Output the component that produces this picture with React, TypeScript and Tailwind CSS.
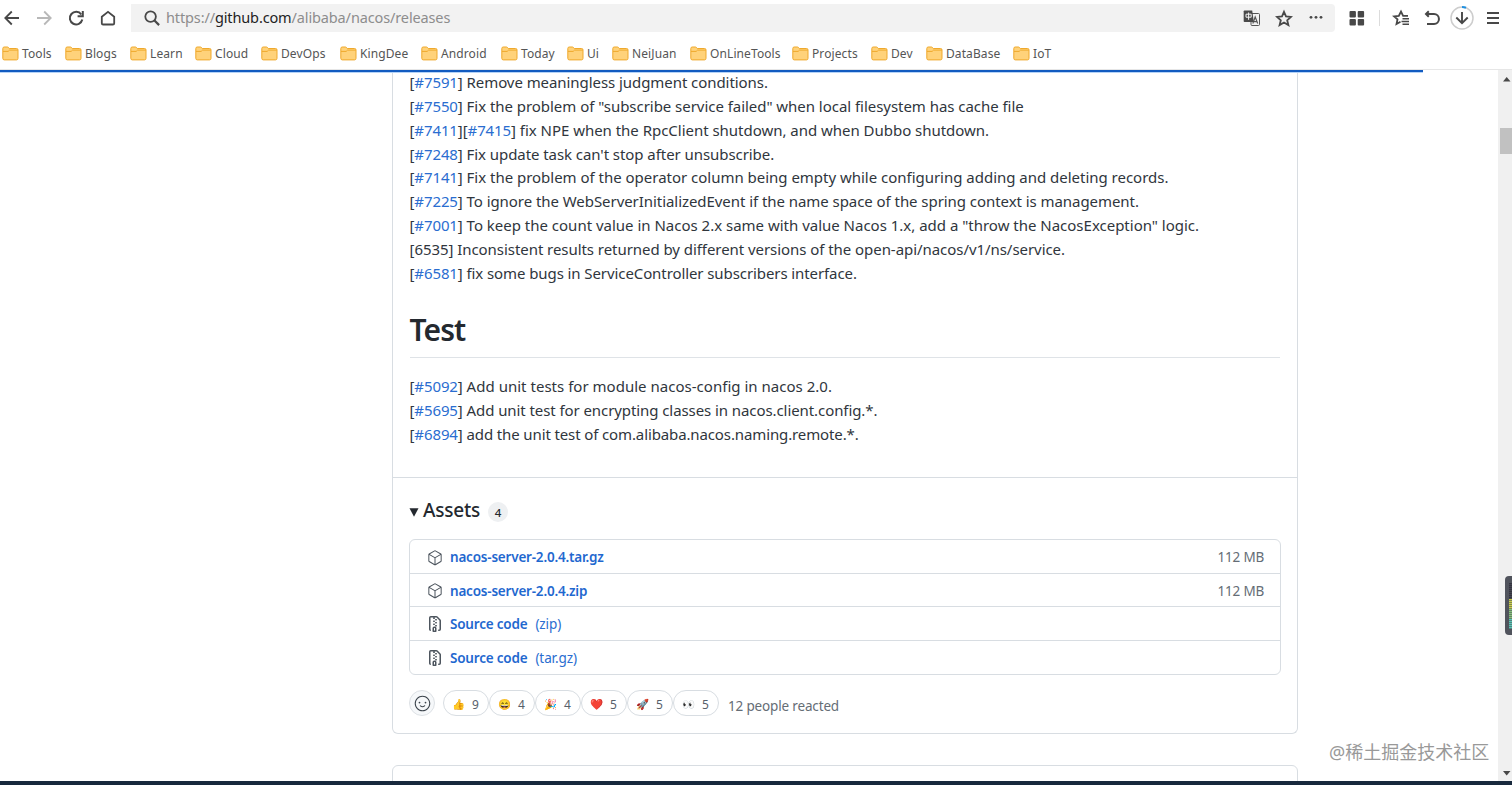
import type { ReactNode } from "react";
import { GoPackage, GoSmiley } from "react-icons/go";

const bookmarks = [
  { name: "Tools", width: "w-[63px]" },
  { name: "Blogs", width: "w-[65px]" },
  { name: "Learn", width: "w-[65px]" },
  { name: "Cloud", width: "w-[66px]" },
  { name: "DevOps", width: "w-[79px]" },
  { name: "KingDee", width: "w-[81px]" },
  { name: "Android", width: "w-[80px]" },
  { name: "Today", width: "w-[66px]" },
  { name: "Ui", width: "w-[45px]" },
  { name: "NeiJuan", width: "w-[78px]" },
  { name: "OnLineTools", width: "w-[102px]" },
  { name: "Projects", width: "w-[79px]" },
  { name: "Dev", width: "w-[55px]" },
  { name: "DataBase", width: "w-[87px]" },
  { name: "IoT", width: "w-[60px]" },
];

const fixes = [
  { ids: ["#7591"], text: " Remove meaningless judgment conditions.", tracking: "tracking-[-0.065px]" },
  { ids: ["#7550"], text: ' Fix the problem of "subscribe service failed" when local filesystem has cache file', tracking: "tracking-[-0.04px]" },
  { ids: ["#7411", "#7415"], text: " fix NPE when the RpcClient shutdown, and when Dubbo shutdown.", tracking: "tracking-[-0.025px]" },
  { ids: ["#7248"], text: " Fix update task can't stop after unsubscribe.", tracking: "tracking-[-0.065px]" },
  { ids: ["#7141"], text: " Fix the problem of the operator column being empty while configuring adding and deleting records.", tracking: "tracking-[-0.018px]" },
  { ids: ["#7225"], text: " To ignore the WebServerInitializedEvent if the name space of the spring context is management.", tracking: "tracking-[-0.057px]" },
  { ids: ["#7001"], text: ' To keep the count value in Nacos 2.x same with value Nacos 1.x, add a "throw the NacosException" logic.', tracking: "tracking-[-0.008px]" },
  { ids: [], text: "[6535] Inconsistent results returned by different versions of the open-api/nacos/v1/ns/service.", tracking: "tracking-[-0.055px]" },
  { ids: ["#6581"], text: " fix some bugs in ServiceController subscribers interface.", tracking: "tracking-[-0.09px]" },
];

const tests = [
  { ids: ["#5092"], text: " Add unit tests for module nacos-config in nacos 2.0.", tracking: "tracking-[0.02px]" },
  { ids: ["#5695"], text: " Add unit test for encrypting classes in nacos.client.config.*.", tracking: "tracking-[-0.08px]" },
  { ids: ["#6894"], text: " add the unit test of com.alibaba.nacos.naming.remote.*.", tracking: "tracking-[-0.12px]" },
];

const assets = [
  { name: "nacos-server-2.0.4.tar.gz", size: "112 MB" },
  { name: "nacos-server-2.0.4.zip", size: "112 MB" },
  { name: "Source code", format: "(zip)" },
  { name: "Source code", format: "(tar.gz)" },
];

const reactions = [
  { emoji: "👍", count: 9 },
  { emoji: "😄", count: 4 },
  { emoji: "🎉", count: 4 },
  { emoji: "❤️", count: 5 },
  { emoji: "🚀", count: 5 },
  { emoji: "👀", count: 5 },
];

type Entry = { ids: string[]; text: string; tracking: string };

function Icon({ children, className = "" }: { children: ReactNode; className?: string }) {
  return (
    <svg
      width="18"
      height="18"
      viewBox="0 0 18 18"
      fill="none"
      stroke="currentColor"
      strokeWidth="1.8"
      className={`shrink-0 ${className}`}
    >
      {children}
    </svg>
  );
}

function FolderIcon() {
  return (
    <svg width="17" height="15" viewBox="0 0 17 15" className="shrink-0">
      <path
        d="M.8 2.6Q.8 1 2.2 1h3.2q.7 0 1.1.5l.8 1h7.2q1.5 0 1.5 1.4v8.4q0 1.6-1.5 1.6H2.3Q.8 13.9.8 12.3z"
        fill="#ffd27a"
        stroke="#efa92c"
      />
      <path d="M1 5.4h5.2l1.3-1.3h8.3" fill="none" stroke="#efa92c" />
    </svg>
  );
}

function FileZipIcon() {
  return (
    <svg width="16" height="16" viewBox="0 0 16 16" fill="currentColor">
      <path
        fillRule="evenodd"
        d="M3.5 1.75a.25.25 0 01.25-.25h3a.75.75 0 000 1.5h.5a.75.75 0 000-1.5h2.086a.25.25 0 01.177.073l2.914 2.914a.25.25 0 01.073.177v8.586a.25.25 0 01-.25.25h-.5a.75.75 0 000 1.5h.5A1.75 1.75 0 0014 13.25V4.664c0-.464-.184-.909-.513-1.237L10.573.513A1.75 1.75 0 009.336 0H3.75A1.75 1.75 0 002 1.75v11.5c0 .649.353 1.214.874 1.515a.75.75 0 10.752-1.298.25.25 0 01-.126-.217V1.75zM8.75 3a.75.75 0 000 1.5h.5a.75.75 0 000-1.5h-.5zM6 5.25a.75.75 0 01.75-.75h.5a.75.75 0 010 1.5h-.5A.75.75 0 016 5.25zm2 1.5A.75.75 0 018.75 6h.5a.75.75 0 010 1.5h-.5A.75.75 0 018 6.75zm-1.25.75a.75.75 0 000 1.5h.5a.75.75 0 000-1.5h-.5zM8 9.75A.75.75 0 018.75 9h.5a.75.75 0 010 1.5h-.5A.75.75 0 018 9.75zm-.75.75a1.75 1.75 0 00-1.75 1.75v3c0 .414.336.75.75.75h2.5a.75.75 0 00.75-.75v-3a1.75 1.75 0 00-1.75-1.75h-.5zM7 12.25a.25.25 0 01.25-.25h.5a.25.25 0 01.25.25v2.25H7v-2.25z"
      />
    </svg>
  );
}

function Toolbar() {
  return (
    <div className="flex h-9 items-center text-[#484848]">
      <div className="-ml-1 flex">
        <button className="flex w-8 justify-center">
          <Icon><path d="M16 9H2.5M8.8 2.5 2.3 9l6.5 6.5" /></Icon>
        </button>
        <button className="flex w-8 justify-center text-[#b8b8b8]">
          <Icon><path d="M2 9h13.5M9.2 2.5 15.7 9l-6.5 6.5" /></Icon>
        </button>
        <button className="flex w-8 justify-center">
          <Icon>
            <path d="M14.3 5.5A6.3 6.3 0 1 0 15.3 10.5" strokeWidth="2" />
            <path d="M15.8 2v5.2h-5.2" strokeWidth="2" />
          </Icon>
        </button>
        <button className="flex w-[31px] justify-center">
          <Icon><path d="M2.8 7.8 9 2.8l6.2 5v6.4q0 1.3-1.3 1.3H4.1q-1.3 0-1.3-1.3z" /></Icon>
        </button>
      </div>

      {/* address bar */}
      <div className="ml-[7.5px] flex h-7 w-[1204px] items-center rounded-r bg-[#f2f2f2]">
        <Icon className="ml-3">
          <circle cx="7.6" cy="7.6" r="5.3" />
          <path d="m11.5 11.5 4.6 4.6" strokeWidth="2.2" />
        </Icon>
        <span className="mt-[-1px] ml-[5.5px] text-[14.5px] tracking-[-0.13px] text-[#8d8d8d]">
          https://<span className="text-[#222]">github.com</span>/alibaba/nacos/releases
        </span>
        <div className="ml-auto flex items-center">
          <button className="flex w-8 justify-center">
            <svg width="18" height="18" viewBox="0 0 18 18" fill="none">
              <rect x="8" y="4.5" width="8.5" height="12" rx="1" fill="#f2f2f2" stroke="#555" />
              <path d="M9.8 14.5 12.2 8l2.5 6.5M10.6 12.6h3.3" stroke="#555" strokeWidth="1.2" />
              <path d="M1.5 1.5h7.7l1.6 11.5H1.5q-.8 0-.8-.8V2.3q0-.8.8-.8z" fill="#4a4a4a" />
              <path d="M3 5.2h5.2v3H3zM5.6 3.5v7.3" stroke="#f2f2f2" />
            </svg>
          </button>
          <button className="flex w-8 justify-center">
            <Icon><path d="m9 2.8 2 4.6 5 .5-3.8 3.3 1.2 4.9L9 13.5l-4.400 2.600 1.200-4.900L2 7.900l5-.5z" /></Icon>
          </button>
          <button className="mr-[3px] flex w-8 justify-center">
            <svg width="18" height="18" viewBox="0 0 18 18" fill="currentColor">
              <circle cx="4" cy="8.3" r="1.4" />
              <circle cx="9" cy="8.3" r="1.4" />
              <circle cx="14" cy="8.3" r="1.4" />
            </svg>
          </button>
        </div>
      </div>

      <button className="flex w-11 justify-center">
        <svg width="18" height="18" viewBox="0 0 18 18" fill="currentColor">
          <rect x="1.5" y="2" width="6.4" height="6.4" rx="1" />
          <rect x="9.7" y="2" width="6.4" height="6.4" rx="1" />
          <rect x="1.5" y="10" width="6.4" height="6.4" rx="1" />
          <rect x="9.7" y="10" width="6.4" height="6.4" rx="1" />
        </svg>
      </button>
      <span className="h-4 w-px bg-[#dcdcdc]" />
      <button className="flex w-[43px] justify-center">
        <Icon>
          <path d="M8.5 12.8 4.5 15l1-4.6L2 7.4l4.800-.5L9 2.5l2.100 4.400h4.900" strokeWidth="1.8" />
          <path d="M10.5 9.8h6.5M9.5 12.5h7.5M10.5 15.2h6.5" strokeWidth="1.6" />
        </Icon>
      </button>
      <button className="flex w-[19px] justify-center">
        <Icon><path d="M5.8 2.2 3 5l2.8 2.8M3 5h8a4.9 4.9 0 0 1 0 9.9H4" strokeWidth="2" /></Icon>
      </button>
      <button className="flex w-10 justify-center">
        <svg width="24" height="24" viewBox="0 0 24 24" fill="none">
          <circle cx="12" cy="12" r="11" stroke="#cdcdcd" strokeWidth="1.5" />
          <path d="M12 1a11 11 0 0 1 4 .8" stroke="#1e90e0" strokeWidth="2" />
          <path d="M12 6v11M6.3 11.5 12 17.2l5.7-5.7" stroke="currentColor" strokeWidth="1.9" />
        </svg>
      </button>
      <button className="flex w-[23px] justify-center">
        <Icon><path d="M3 4h12M3 9h12M3 14h12" /></Icon>
      </button>
    </div>
  );
}

function Bookmarks() {
  return (
    <div className="flex h-[33px] items-center pt-px pl-[2px]">
      {bookmarks.map((b) => (
        <div key={b.name} className={`flex shrink-0 items-center gap-[3px] ${b.width}`}>
          <FolderIcon />
          <span className="pt-px text-[12px] leading-4 tracking-[0.1px] text-[#555]">{b.name}</span>
        </div>
      ))}
    </div>
  );
}

function EntryLine({ entry }: { entry: Entry }) {
  return (
    <p className={`h-[23.84px] whitespace-nowrap text-[15px] leading-[23.84px] text-[#30363d] ${entry.tracking}`}>
      {entry.ids.map((id) => (
        <span key={id} className="tracking-[-0.1px]">
          [<a href="#" className="text-[#2a6dd0]">{id}</a>]
        </span>
      ))}
      {entry.text}
    </p>
  );
}

function Assets() {
  return (
    <div className="px-4">
      <div className="flex h-[61.4px] items-center pt-[3px]">
        <svg width="10" height="9" viewBox="0 0 10 9" className="mt-1 shrink-0">
          <path d="M.5.3h9L5 8.7z" fill="#24292f" />
        </svg>
        <h3 className="ml-[4px] text-[19px] font-medium tracking-[-0.2px]">Assets</h3>
        <span className="mt-[4px] ml-2 flex size-5 items-center justify-center rounded-full bg-[#eef0f2] text-[11.5px] font-medium">
          4
        </span>
      </div>

      <ul className="rounded-md border border-[#d8dde2]">
        {assets.map((a, i) => (
          <li
            key={i}
            className="flex h-[33.4px] items-center border-b border-[#d8dde2] px-4 pt-[2px] text-[13.5px] tracking-[-0.2px] text-[#656d76] last:border-b-0"
          >
            <span className="ml-[0.5px] w-[23.5px] text-[#4d555e]">
              {a.size ? <GoPackage size={16} /> : <FileZipIcon />}
            </span>
            <a href="#" className="font-semibold text-[#1f68cf]">{a.name}</a>
            {a.format && <a href="#" className="ml-[8px] tracking-[-0.1px] text-[#2a6dd0]">{a.format}</a>}
            {a.size && <span className="ml-auto">{a.size}</span>}
          </li>
        ))}
      </ul>

      <div className="mt-[15.5px] flex h-[26px] items-center">
        <button className="mr-2 flex size-[26px] items-center justify-center rounded-full border border-[#dde1e5] bg-[#f6f8fa] text-[#3c444c]">
          <GoSmiley size={17} className="shrink-0" />
        </button>
        {reactions.map((r) => (
          <button
            key={r.emoji}
            className="flex h-[26px] w-[46px] items-center rounded-full border border-[#d8dde2] pt-[2px] pl-[7px] text-[12px] text-[#57606a]"
          >
            <span className="w-[15px] text-center font-['Noto_Color_Emoji'] text-[10.5px]">{r.emoji}</span>
            <span className="ml-[6px] pt-px">{r.count}</span>
          </button>
        ))}
        <span className="mt-[5px] ml-[9px] text-[13.5px] tracking-[-0.16px] text-[#656d76]">12 people reacted</span>
      </div>
    </div>
  );
}

function Scrollbar() {
  return (
    <div className="flex w-[14px] flex-col items-end bg-[#f0f0f0]">
      <svg width="12" height="58" viewBox="0 0 12 58">
        <path d="M3 11.5h7.5L6.7 7z" fill="#484848" />
      </svg>
      <div className="h-[26px] w-3 bg-[#c1c1c1]" />
      <svg width="12" height="12" viewBox="0 0 12 12" className="mt-auto">
        <path d="M3 2h7.5L6.7 6.5z" fill="#484848" />
      </svg>
    </div>
  );
}

// level meter docked to the right edge of the screen
function LevelMeter() {
  return (
    <div className="absolute top-[576px] right-0 h-[59px] w-[7px] rounded-l bg-[#50535c] pt-[7px] pl-1">
      <svg width="3" height="46" viewBox="0 0 3 46">
        {Array.from({ length: 23 }, (_, i) => (
          <rect
            key={i}
            y={i * 2}
            width="3"
            height="1.4"
            fill={i < 8 ? "#34343f" : i < 13 ? "#c9cf4a" : i < 18 ? "#86c27a" : "#58c5b4"}
          />
        ))}
      </svg>
    </div>
  );
}

export default function App() {
  return (
    <div className="relative flex h-[785px] w-[1512px] flex-col overflow-hidden bg-white font-['Noto_Sans','Noto_Sans_CJK_SC',sans-serif] text-[#24292f]">
      <Toolbar />
      <Bookmarks />
      <div className="h-px bg-[#e6e6e6]" />

      <div className="flex h-[711px] overflow-hidden">
        <main className="flex-1 pl-[392px]">
          <div className="h-[664px] w-[906px] rounded-b-md border border-t-0 border-[#d8dde2]">
            <div className="h-[408px] border-b border-[#d8dde2] pt-[1.1px] pr-[17px] pl-[16.5px]">
              {fixes.map((f) => (
                <EntryLine key={f.text} entry={f} />
              ))}
              <h1 className="mt-[23.7px] mb-[16.7px] h-[49px] border-b border-[#dfe3e7] pt-[2px] text-[30px] leading-[38px] font-semibold tracking-[-0.9px]">
                Test
              </h1>
              {tests.map((t) => (
                <EntryLine key={t.text} entry={t} />
              ))}
            </div>
            <Assets />
          </div>
          <div className="mt-[31px] h-16 w-[906px] rounded-t-md border border-[#d8dde2]" />
        </main>
        <Scrollbar />
      </div>
      <div className="h-1 bg-[#18293d]" />

      {/* page loading progress */}
      <div className="absolute top-[70px] left-0 h-[2px] w-[1423px] bg-[#125bc0] shadow-[0_1px_0_#b5d3f7]" />
      <LevelMeter />
      <div className="absolute top-[739px] left-[1329px] text-[18px] leading-[26px] whitespace-nowrap text-[#999]">
        @稀土掘金技术社区
      </div>
    </div>
  );
}
